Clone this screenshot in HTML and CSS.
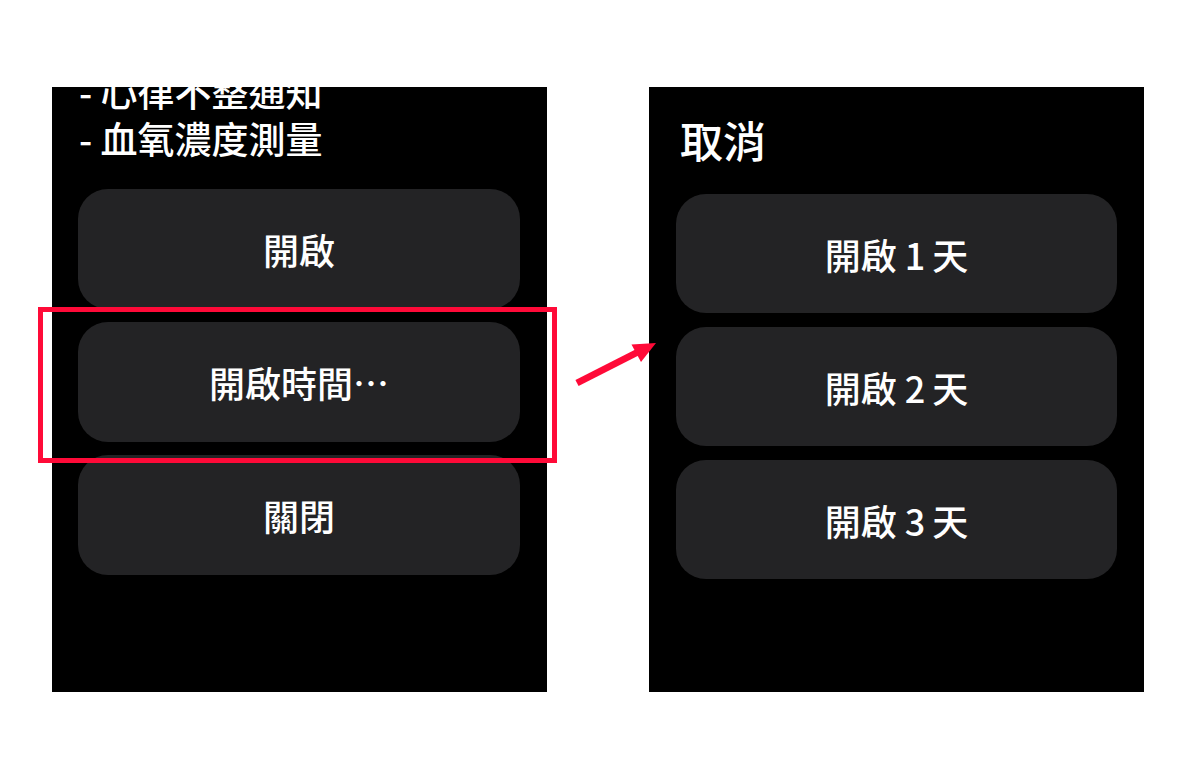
FILE: index.html
```html
<!DOCTYPE html>
<html lang="zh-Hant">
<head>
<meta charset="utf-8">
<title>開啟時間</title>
<link rel="stylesheet" href="styles.css">
</head>
<body>
<div class="stage">
  <div class="panels">
    <section class="screen screen-left">
      <div class="notes">
        <div class="note-line">- 心律不整通知</div>
        <div class="note-line">- 血氧濃度測量</div>
      </div>
      <div class="btn-list">
        <div class="btn">開啟</div>
        <div class="btn">開啟時間⋯</div>
        <div class="btn">關閉</div>
      </div>
    </section>
    <section class="screen screen-right">
      <div class="cancel">取消</div>
      <div class="btn-list btn-list-right">
        <div class="btn">開啟<span class="num">1</span>天</div>
        <div class="btn">開啟<span class="num">2</span>天</div>
        <div class="btn">開啟<span class="num">3</span>天</div>
      </div>
    </section>
  </div>
  <div class="highlight"></div>
  <svg class="arrow" width="1200" height="780" viewBox="0 0 1200 780">
    <line x1="577" y1="383" x2="638" y2="352" stroke="#ff0a38" stroke-width="7"/>
    <polygon points="656,343 631.5,344.5 641,362" fill="#ff0a38"/>
  </svg>
</div>
</body>
</html>
```

FILE: styles.css
```css
* { box-sizing: border-box; }

html, body {
  margin: 0;
  padding: 0;
  background: #ffffff;
}

body {
  font-family: "Noto Sans CJK TC", "Noto Sans", sans-serif;
  color: #ffffff;
  font-weight: 500;
}

.stage {
  position: relative;
  width: 1200px;
  height: 780px;
  overflow: hidden;
}

.panels {
  display: flex;
  gap: 102px;
  padding-top: 87px;
  padding-left: 52px;
}

.screen {
  width: 495px;
  height: 605px;
  background: #000000;
  overflow: hidden;
  display: flex;
  flex-direction: column;
}

.screen-left {
  padding: 0 27px 0 26px;
}

.notes {
  margin-top: -19px;
  padding-left: 1px;
  font-size: 37px;
  line-height: 47px;
  white-space: nowrap;
}

.btn-list {
  display: flex;
  flex-direction: column;
  gap: 13px;
  margin-top: 27px;
}

.btn {
  height: 120px;
  border-radius: 30px;
  background: #232325;
  display: flex;
  align-items: center;
  justify-content: center;
  font-size: 36px;
  white-space: nowrap;
}

.num {
  margin: 0 7px 0 8px;
}

.screen-right {
  padding: 0 27px;
}

.cancel {
  margin-top: 26px;
  padding-left: 4px;
  font-size: 43px;
  line-height: 52px;
}

.btn-list-right {
  margin-top: 29px;
  gap: 14px;
}

.btn-list-right .btn {
  height: 119px;
}

.highlight {
  position: absolute;
  left: 38px;
  top: 307px;
  width: 519px;
  height: 156px;
  border: 5px solid #ff0a38;
}

.arrow {
  position: absolute;
  left: 0;
  top: 0;
  pointer-events: none;
}
```
